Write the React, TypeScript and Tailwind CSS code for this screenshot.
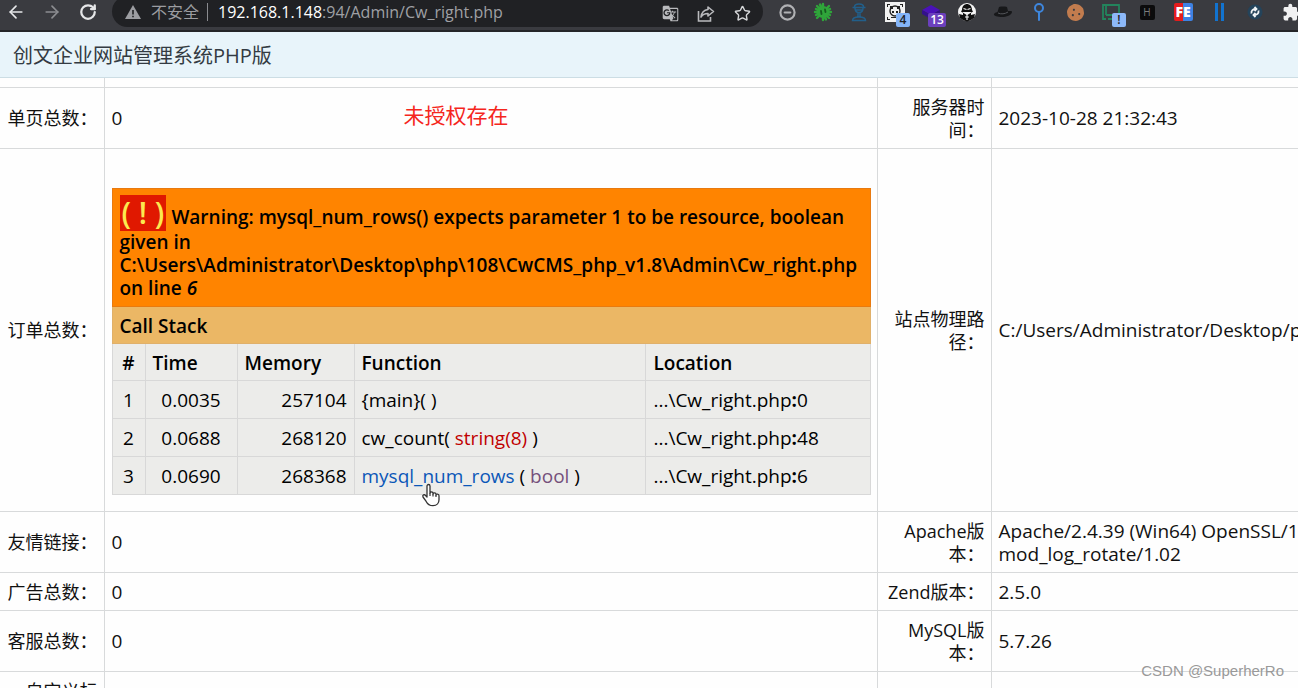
import type { ReactNode } from "react"
import { ArrowLeft, ArrowRight, RotateCw, Star, CircleMinus } from "lucide-react"
import { MdGTranslate, MdExtension } from "react-icons/md"
import { FaCookie } from "react-icons/fa"

const stack = [
  { id: 1, time: "0.0035", memory: "257104", fn: <>{"{main}( )"}</>, line: "0" },
  {
    id: 2,
    time: "0.0688",
    memory: "268120",
    fn: (
      <>
        cw_count( <span className="text-[#c00000]">string(8)</span> )
      </>
    ),
    line: "48",
  },
  {
    id: 3,
    time: "0.0690",
    memory: "268368",
    fn: (
      <>
        <a href="#mysql_num_rows" className="text-[#0b57b8]">
          mysql_num_rows
        </a>{" "}
        ( <span className="text-[#75507b]">bool</span> )
      </>
    ),
    line: "6",
  },
]

function ToolButton({ label, children }: { label: string; children: ReactNode }) {
  return (
    <button type="button" aria-label={label} className="relative flex size-6 shrink-0 items-center justify-center">
      {children}
    </button>
  )
}

function Badge({ className, children }: { className: string; children: ReactNode }) {
  return (
    <span className={`absolute top-[13px] flex h-[14px] items-center justify-center rounded-xs text-[12px] font-semibold ${className}`}>
      {children}
    </span>
  )
}

function Extensions() {
  return (
    <div className="-mr-[5px] flex gap-3">
      <ToolButton label="Blocker">
        <CircleMinus size={17} strokeWidth={3} className="text-[#b0b1b4]" />
      </ToolButton>
      <ToolButton label="Bug finder">
        <svg width="20" height="20" viewBox="0 0 20 20">
          <path
            d="M10 2v16M2 10h16M4 4l12 12M16 4L4 16M7 2.500l6 15M3 7l14 6M3 13l14-6"
            stroke="#2fa53a"
            strokeWidth="2.400"
            strokeLinecap="round"
          />
          <ellipse cx="10" cy="10" rx="6.500" ry="6" fill="#2fa53a" />
          <path d="M8 9l.5 3M12 7.500l.5 2.500" stroke="#165c20" strokeWidth="1.800" strokeLinecap="round" />
        </svg>
      </ToolButton>
      <ToolButton label="Agent">
        <svg width="16" height="20" viewBox="0 0 16 20" fill="none" stroke="#225f8a" strokeWidth="1.500">
          <path d="M3.500 5C3.500 1 12.500 1 12.500 5M1.500 5.500h13M4 6c0 6 8 6 8 0M4 8h8M7 10.500v4M9 10.500v4M1.500 18.500c0-3 3-3.500 6.500-3.500s6.500.5 6.500 3.500z" />
        </svg>
      </ToolButton>
      <ToolButton label="QR code">
        <svg width="20" height="20" viewBox="0 0 20 20">
          <rect width="20" height="20" fill="#f1f1f1" />
          <path d="M2 2h3v1H3v2H2zM15 2h3v3h-1V3h-2zM2 15h1v2h2v1H2z" fill="#222" />
          <circle cx="10" cy="9" r="5" fill="none" stroke="#222" strokeWidth="1.400" />
          <path d="M5 4h3v3H5zM12 4h3v3h-3zM7 9h2v2H7zM11 9h2v2h-2zM6 15h8v1H6z" fill="#222" />
        </svg>
        <Badge className="left-[13px] w-[14px] bg-[#84b4f8] text-[#202124]">4</Badge>
      </ToolButton>
      <ToolButton label="Wappalyzer">
        <svg width="20" height="16" viewBox="0 0 20 16">
          <path d="M10 1l9 5-9 5-9-5z" fill="#4a12b8" />
          <path d="M1 6l9 5 9-5v4l-9 5-9-5z" fill="#34108c" />
        </svg>
        <Badge className="left-[9px] w-[18px] bg-[#6b40bd] text-white">13</Badge>
      </ToolButton>
      <ToolButton label="Anonymous">
        <svg width="20" height="20" viewBox="0 0 20 20">
          <circle cx="10" cy="10" r="9" fill="#f4f4f4" />
          <path d="M5 8c0-8 10-8 10 0l1 1.500-2 1.500v2l4-1-1 4-3 2-4 1.500L6 18l-3-2-1-4 4 1v-2L4 9.500z" fill="#111" />
          <path d="M6.500 6.500l3 1M13.500 6.500l-3 1M7 10.500h6l-3 2zM8 15h4M10 13v5" stroke="#f4f4f4" strokeWidth="1.200" fill="#f4f4f4" />
        </svg>
      </ToolButton>
      <ToolButton label="Hat">
        <svg width="20" height="14" viewBox="0 0 20 14">
          <path d="M1 9c1-2 3-1.500 3.500-2L6 2c1-1 3-.5 4-.5s3-.5 4 .5l1 4c1 .5 4-1 4 1 0 3-6 5-10 5s-9-1-8-3z" fill="#17181a" />
          <path d="M5 8c3 1.500 7 1 10-1" stroke="#54565a" strokeWidth="1" fill="none" />
        </svg>
      </ToolButton>
      <ToolButton label="Pin">
        <svg width="12" height="20" viewBox="0 0 12 20" fill="none" stroke="#3e86dc" strokeWidth="2">
          <circle cx="6" cy="6" r="4" />
          <path d="M6 10v8" strokeLinecap="round" />
        </svg>
      </ToolButton>
      <ToolButton label="Cookies">
        <FaCookie size={17} className="text-[#c27c4e]" />
      </ToolButton>
      <ToolButton label="Screen">
        <svg width="20" height="18" viewBox="0 0 20 18" fill="none" stroke="#23845c" strokeWidth="1.800">
          <path d="M5 12V2h13v10H5M5 2H2v14h3M7 16h8" />
        </svg>
        <Badge className="left-[13px] w-[14px] bg-[#8db8f8] text-[#202124]">!</Badge>
      </ToolButton>
      <ToolButton label="HackBar">
        <span className="flex size-[15px] items-center justify-center rounded-xs bg-[#0b0b0c] text-[10px] text-[#7c7c7c]">H</span>
      </ToolButton>
      <ToolButton label="FeHelper">
        <span className="flex h-[18px] w-[19px] items-center justify-center rounded-xs bg-linear-to-r from-[#e51c1c] from-50% to-[#3d82e4] to-50% text-[14px] leading-4 font-extrabold text-white">
          FE
        </span>
      </ToolButton>
      <ToolButton label="Parallel">
        <span className="h-[18px] w-[9px] border-x-3 border-[#1273cf]" />
      </ToolButton>
      <ToolButton label="Sync">
        <svg width="16" height="16" viewBox="0 0 16 16" fill="none" stroke="#f1f4f6" strokeWidth="1.800">
          <circle cx="8" cy="8" r="7.500" fill="#24435a" stroke="none" />
          <path d="M4.500 9.500c-.5-3 1.500-4.500 4.500-4.500M7.500 3l2 2-2 2M11.500 6.500c.5 3-1.500 4.500-4.500 4.500M8.500 9l-2 2 2 2" />
        </svg>
      </ToolButton>
      <ToolButton label="Extensions">
        <MdExtension size={19} className="text-[#f1f1f2]" />
      </ToolButton>
    </div>
  )
}

function BrowserBar() {
  return (
    <header className="flex h-8 gap-3 overflow-hidden border-b-2 border-[#242528] bg-[#3a3b40] pl-1">
      <ToolButton label="Back">
        <ArrowLeft size={20} className="text-[#e6e7e9]" />
      </ToolButton>
      <ToolButton label="Forward">
        <ArrowRight size={20} className="text-[#8c8d91]" />
      </ToolButton>
      <ToolButton label="Reload">
        <RotateCw size={18} strokeWidth={3} className="text-[#e6e7e9]" />
      </ToolButton>
      <div className="-mt-1 flex h-[31px] min-w-0 flex-1 items-center rounded-full bg-[#202124] pr-[9px] pl-[13px]">
        <svg width="16" height="14" viewBox="0 0 16 14" className="shrink-0">
          <path d="M8 0l8 14H0z" fill="#9c9da1" />
          <path d="M7.200 5h1.600v4.500H7.200zM7.200 10.700h1.600v1.600H7.200z" fill="#202124" />
        </svg>
        <span className="ml-[10px] shrink-0 text-[16px] text-[#9b9ca0]">不安全</span>
        <span className="mx-[8px] h-[18px] w-px shrink-0 bg-[#8a8b8f]" />
        <div role="textbox" aria-label="Address" className="flex-1 pl-[2px] text-[16px] whitespace-nowrap text-[#9fa0a4]">
          <span className="text-white">192.168.1.148</span>:94/Admin/Cw_right.php
        </div>
        <div className="flex gap-3 pt-1">
          <ToolButton label="Translate">
            <MdGTranslate size={17} className="text-[#b9babd]" />
          </ToolButton>
          <ToolButton label="Share">
            <svg width="18" height="18" viewBox="0 0 18 18" fill="none" stroke="#b9babd" strokeWidth="1.600">
              <path d="M1.500 6v10h12v-4" />
              <path d="M11 2l5.500 4.500L11 11V8.500c-3.500 0-5.500 1-7 3.500.5-4 3-7 7-7.500z" strokeLinejoin="round" />
            </svg>
          </ToolButton>
          <ToolButton label="Bookmark">
            <Star size={17} className="text-[#d5d6d8]" />
          </ToolButton>
        </div>
      </div>
      <Extensions />
    </header>
  )
}

function XdebugError() {
  return (
    <table className="w-full table-fixed border-collapse text-[19px] leading-[23px] text-black">
      <colgroup>
        <col className="w-[33px]" />
        <col className="w-[92px]" />
        <col className="w-[117px]" />
        <col />
        <col className="w-[224px]" />
      </colgroup>
      <tbody>
        <tr className="bg-[#ff8400]">
          <th colSpan={5} className="border border-[#e87a10] px-[7px] py-[6px] text-left font-semibold">
            <span className="mr-[5px] inline-block bg-[#e01800] px-[2px] text-[30px] leading-[36px] font-semibold text-[#fce94f]">( ! )</span>
            Warning: mysql_num_rows() expects parameter 1 to be resource, boolean given in
            <br />
            C:\Users\Administrator\Desktop\php\108\CwCMS_php_v1.8\Admin\Cw_right.php on line <i>6</i>
          </th>
        </tr>
        <tr className="bg-[#ebb765]">
          <th colSpan={5} className="border border-[#e0b06a] px-[7px] pt-[8px] pb-[5px] text-left font-semibold">
            Call Stack
          </th>
        </tr>
        <tr className="bg-[#ececea] text-left">
          <th className="border border-[#d8d8d8] pt-[8px] pb-[5px] text-center font-semibold">#</th>
          <th className="border border-[#d8d8d8] px-[7px] pt-[8px] pb-[5px] font-semibold">Time</th>
          <th className="border border-[#d8d8d8] px-[7px] pt-[8px] pb-[5px] font-semibold">Memory</th>
          <th className="border border-[#d8d8d8] px-[7px] pt-[8px] pb-[5px] font-semibold">Function</th>
          <th className="border border-[#d8d8d8] px-[7px] pt-[8px] pb-[5px] font-semibold">Location</th>
        </tr>
        {stack.map((call) => (
          <tr key={call.id} className="bg-[#ececea]">
            <td className="border border-[#d8d8d8] pt-[8px] pb-[6px] text-center">{call.id}</td>
            <td className="border border-[#d8d8d8] pt-[8px] pb-[6px] text-center">{call.time}</td>
            <td className="border border-[#d8d8d8] px-[7px] pt-[8px] pb-[6px] text-right">{call.memory}</td>
            <td className="border border-[#d8d8d8] px-[7px] pt-[8px] pb-[6px]">{call.fn}</td>
            <td className="border border-[#d8d8d8] px-[7px] pt-[8px] pb-[6px]">
              ...\Cw_right.php<b>:</b>
              {call.line}
            </td>
          </tr>
        ))}
      </tbody>
    </table>
  )
}

function HandCursor() {
  return (
    <svg width="20" height="24" viewBox="0 0 20 24" className="absolute bottom-1 left-[316px]">
      <path
        d="M6 14V3c0-2 3-2 3 0v7c0-1.500 3-1.500 3 0v1c0-1.500 3-1.500 3 .3v.7c0-1.400 3-1.200 3 .7v4c0 3-2 6-6 6-4 0-5.500-1.500-7-4.500L2 14c-1-2 1.500-3 2.500-1.500z"
        fill="#fff"
        stroke="#333"
        strokeWidth="1.300"
        strokeLinejoin="round"
      />
      <path d="M9 10v3M12 11v2.500M15 12v2" stroke="#333" strokeWidth="1.200" />
    </svg>
  )
}

interface RowProps {
  label: string
  value: ReactNode
  infoLabel?: ReactNode
  info?: ReactNode
}

function InfoRow({ label, value, infoLabel, info }: RowProps) {
  return (
    <tr>
      <th className="border-y border-r border-[#d8dadb] px-[6px] pt-[8px] pb-[6px] text-right text-[18px] font-normal">{label}</th>
      <td className="relative border border-[#d8dadb] pt-[2px] pr-[6px] pl-[7px]">{value}</td>
      <th className="border border-[#d8dadb] px-[6px] pt-[8px] pb-[6px] text-right text-[18px] font-normal">{infoLabel}</th>
      <td className="overflow-hidden border-y border-l border-[#d8dadb] pt-[2px] pl-[7px] whitespace-nowrap">{info}</td>
    </tr>
  )
}

export default function App() {
  return (
    <div className="relative h-screen overflow-hidden bg-[#fefefe] font-['Open_Sans','Noto_Sans_CJK_SC',sans-serif] text-[#111]">
      <BrowserBar />
      <h1 className="border-b border-[#ccdde4] bg-[#e8f4fa] pt-[9px] pb-[7px] pl-[13px] text-[20px] leading-[29px] text-[#333b42]">
        创文企业网站管理系统PHP版
      </h1>
      <main>
        <table className="w-full table-fixed border-collapse text-[19px] leading-[23px]">
          <colgroup>
            <col className="w-[104px]" />
            <col />
            <col className="w-[114px]" />
            <col className="w-[307px]" />
          </colgroup>
          <tbody>
            <tr className="h-[9px]">
              <td className="border-r border-[#d8dadb]" />
              <td className="border-r border-[#d8dadb]" />
              <td className="border-r border-[#d8dadb]" />
              <td />
            </tr>
            <InfoRow
              label="单页总数："
              value={
                <>
                  0<span className="absolute top-4 left-[299px] text-[21px] text-[#f5261d]">未授权存在</span>
                </>
              }
              infoLabel="服务器时间："
              info="2023-10-28 21:32:43"
            />
            <InfoRow
              label="订单总数："
              value={
                <div className="pt-[37px] pb-4">
                  <XdebugError />
                  <HandCursor />
                </div>
              }
              infoLabel="站点物理路径："
              info="C:/Users/Administrator/Desktop/php/108/CwCMS_php_v1.8"
            />
            <InfoRow
              label="友情链接："
              value="0"
              infoLabel="Apache版本："
              info={
                <>
                  Apache/2.4.39 (Win64) OpenSSL/1.1.1b
                  <br />
                  mod_log_rotate/1.02
                </>
              }
            />
            <InfoRow label="广告总数：" value="0" infoLabel="Zend版本：" info="2.5.0" />
            <InfoRow label="客服总数：" value="0" infoLabel="MySQL版本：" info="5.7.26" />
            <InfoRow label="自定义标签：" value="" />
          </tbody>
        </table>
      </main>
      <span className="absolute right-[14px] bottom-[7px] font-['Liberation_Sans',sans-serif] text-[15px] leading-5 text-[#999]">
        CSDN @SuperherRo
      </span>
    </div>
  )
}
